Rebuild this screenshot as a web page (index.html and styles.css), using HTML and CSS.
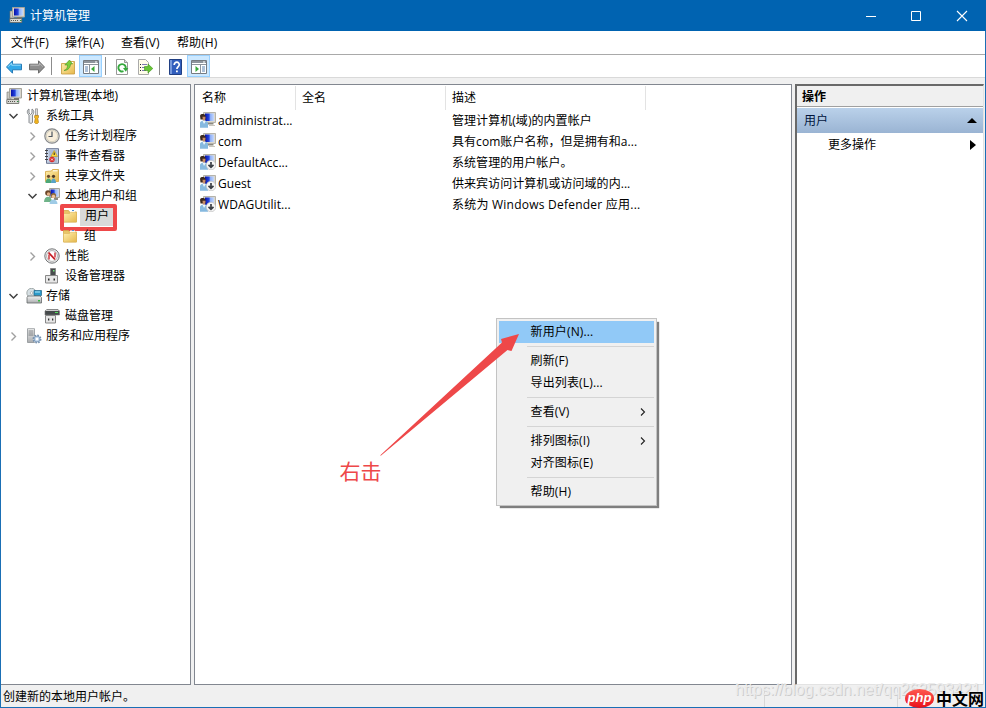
FILE: index.html
```html
<!doctype html>
<html lang="zh-CN">
<head>
    <meta charset="utf-8">
    <title>计算机管理</title>
    <link rel="stylesheet" href="styles.css">
</head>
<body>
    <!-- icons -->
    <svg class="defs">
        <defs>
            <linearGradient id="blue" x1="0" y1="0" x2="1" y2="0">
                <stop offset="0" stop-color="#0711a8"/><stop offset=".45" stop-color="#2445e0"/><stop offset=".6" stop-color="#8fb0f8"/><stop offset="1" stop-color="#c5d8fc"/>
            </linearGradient>
            <linearGradient id="gold" x1="0" y1="0" x2="1" y2="1">
                <stop offset="0" stop-color="#fff0b0"/><stop offset="1" stop-color="#e6b84c"/>
            </linearGradient>
            <linearGradient id="steel" x1="0" y1="0" x2="0" y2="1">
                <stop offset="0" stop-color="#f4f4f4"/><stop offset="1" stop-color="#a9abad"/>
            </linearGradient>
        </defs>
        <symbol id="computer" viewBox="0 0 16 16">
            <path d="M1 4h4v7H1z" fill="#c9c9c4" stroke="#77776f" stroke-width=".6"/>
            <path d="M3.500.5h12v9.500h-12z" fill="#d8d5cb" stroke="#a5a39a"/>
            <path d="M5 1.500h9v7H5z" fill="url(#blue)"/>
            <path d="M8 10h5v2H8z" fill="#77776f"/>
            <path d="M.8 11.500h12v4h-12z" fill="#d7d7d2" stroke="#66665f" stroke-width=".8"/>
            <path d="M2 13.500h8" stroke="#55554f" stroke-dasharray="1 1"/>
            <path d="M11 13h1.500v1H11z" fill="#2d8a40"/>
        </symbol>
        <symbol id="tools" viewBox="0 0 16 16">
            <path d="M3 1v4l1.500 1.500L6 5V1c2 1 2.500 4 .5 6v7.500c0 1-3.500 1-3.500 0V7C.5 5 1 2 3 1z" fill="#e4e6e8" stroke="#6d7276" stroke-width=".8"/>
            <path d="M9.500.8h2v6.500h-2z" fill="#ddd" stroke="#777" stroke-width=".6"/>
            <path d="M8.700 7.500h3.800v2l-.7 1 .7 4-1 1h-2l-1-1 .7-4-.7-1z" fill="#f0b41f" stroke="#a8740b" stroke-width=".6"/>
        </symbol>
        <symbol id="clock" viewBox="0 0 16 16">
            <circle cx="8" cy="8" r="7.200" fill="#e9e6dc" stroke="#85878a" stroke-width="1.200"/>
            <circle cx="8" cy="8" r="5.700" fill="#f8eedb" stroke="#c9c4b2" stroke-width=".7"/>
            <path d="M8 3.500V8.500H4.500" fill="none" stroke="#4b5560" stroke-width="1.200"/>
        </symbol>
        <symbol id="event" viewBox="0 0 16 16">
            <path d="M2.500.7h12v14.600h-12z" fill="#c3d0e4" stroke="#6b7690"/>
            <path d="M5 3h8M5 5h8M5 7h8M5 9h8M5 11h8M5 13h8" stroke="#8a9cbd" stroke-width=".8"/>
            <path d="M1 2.500h3M1 5.500h3M1 8.500h3M1 11.500h3" stroke="#444"/>
            <path d="M10.200 2.500l3.300 6h-6.600z" fill="#ffd83b" stroke="#b78d08" stroke-width=".5"/>
            <path d="M10.200 4.500v2.500" stroke="#222"/>
            <circle cx="8" cy="11.500" r="2.700" fill="#d92a2a"/><path d="M7 10.500l2 2m0-2l-2 2" stroke="#fff" stroke-width=".8"/>
        </symbol>
        <symbol id="share" viewBox="0 0 16 16">
            <path d="M1.500 3.500l6-.5 1-1.500h6v12h-13z" fill="url(#gold)" stroke="#d2a23b" stroke-width=".8"/><path d="M9 2.800h4.500" stroke="#fff"/>
            <circle cx="4.500" cy="8.300" r="1.600" fill="#6b4a2d"/><circle cx="9.500" cy="8.300" r="1.600" fill="#4c3926"/>
            <path d="M1.500 15c0-6 6-6 6 0z" fill="#4ca777"/><path d="M7 15c0-6 5-6 5 0z" fill="#58a3c8"/>
        </symbol>
        <symbol id="group" viewBox="0 0 16 16">
            <path d="M5.500.5h10v9h-10z" fill="#d8d5cb" stroke="#a5a39a"/>
            <path d="M6.500 1.500h8v7h-8z" fill="url(#blue)"/><path d="M10 10h4v2h-4z" fill="#8a887f"/>
            <circle cx="4" cy="5" r="2.800" fill="#6a4527"/><circle cx="4.500" cy="6" r="1.700" fill="#e0ad83"/>
            <circle cx="9.500" cy="7.500" r="2.600" fill="#8f6a3d"/><circle cx="9.500" cy="8.500" r="1.700" fill="#efc49c"/>
            <path d="M0 14c0-7 8-7 8 0z" fill="#6fb389"/><path d="M5.500 16c0-6 8-6 8 0z" fill="#9fcbe6"/>
        </symbol>
        <symbol id="folder" viewBox="0 0 16 16">
            <path d="M1.500 2.500h5l1 1.500h7v10h-13z" fill="#e9c567" stroke="#d5aa49" stroke-width=".8"/>
            <path d="M8 2.500h5v3H8z" fill="#fff"/><path d="M10 2h2v1h-2z" fill="#4a90d8"/>
            <path d="M1.500 5.500h6l1-1.200h6v9.700h-13z" fill="url(#gold)" stroke="#dcb65a" stroke-width=".6"/>
        </symbol>
        <symbol id="perf" viewBox="0 0 16 16">
            <circle cx="8" cy="8" r="7.200" fill="#eee" stroke="#747678"/>
            <circle cx="8" cy="8" r="5.400" fill="#fff" stroke="#999" stroke-width=".7"/>
            <path d="M5 11.500V6.500M11 4.500v5" stroke="#c51d24" stroke-width="1.300"/>
            <path d="M4.500 4.500l6.500 7" stroke="#c51d24" stroke-width="1.800"/>
        </symbol>
        <symbol id="device" viewBox="0 0 16 16">
            <path d="M6.500.5h5v8h-5z" fill="#484c4d" stroke="#888"/><path d="M9 2h1.500v1.500H9z" fill="#72e47b"/>
            <path d="M1.500 7.500h12v7.500h-12z" fill="#e6e6e6" stroke="#888"/>
            <path d="M4 10.500h1.500v2H4zM9.500 10.500H11v2H9.500z" fill="#333"/>
        </symbol>
        <symbol id="storage" viewBox="0 0 16 16">
            <circle cx="5.500" cy="5" r="4.700" fill="#d7e0e4" stroke="#86908f" stroke-width=".7"/><circle cx="5.500" cy="5" r="1.300" fill="#fff" stroke="#888" stroke-width=".5"/>
            <path d="M8 2.500h7.500v5H8z" fill="#2b9ac9" stroke="#1c6286" stroke-width=".7"/><path d="M9 3.500h5v1H9z" fill="#b5e8fb"/>
            <path d="M1 9.500L2 8h12l1.500 1.500V15H1z" fill="url(#steel)" stroke="#66696b" stroke-width=".8"/><path d="M12 12h2v1.500h-2z" fill="#38b83f"/>
        </symbol>
        <symbol id="disk" viewBox="0 0 16 16">
            <path d="M1 3l2-1.500h11L15.500 3v4H1z" fill="#45494a" stroke="#777" stroke-width=".6"/><path d="M2 2.500h12.500" stroke="#ccc"/>
            <path d="M11 4.500h3" stroke="#54e05d"/>
            <path d="M1.500 7.500h10v7.500h-10z" fill="#e6e6e6" stroke="#888"/><path d="M4 10.500h1.300v2H4zM8 10.500h1.300v2H8z" fill="#333"/>
        </symbol>
        <symbol id="service" viewBox="0 0 16 16">
            <path d="M1.500.7h7v13.800h-7z" fill="url(#steel)" stroke="#8d9296" stroke-width=".8"/>
            <path d="M2.500 3h5M2.500 5h5M2.500 7h5" stroke="#62686c" stroke-width=".8"/>
            <circle cx="11" cy="11" r="3.600" fill="#dceafa" stroke="#7590ad" stroke-width="1.800" stroke-dasharray="1.600 1.200"/>
            <circle cx="11" cy="11" r="2.900" fill="#c3d8ee" stroke="#6b89aa" stroke-width=".7"/><circle cx="11" cy="11" r="1.200" fill="#fff"/>
        </symbol>
        <symbol id="user" viewBox="0 0 16 16">
            <path d="M3.500.5h12v10h-12z" fill="#dbd8cf" stroke="#b5b3aa"/>
            <path d="M5 1.500h9v7.500H5z" fill="url(#blue)"/><path d="M7.500 11h6v1.500h-6z" fill="#8b897f"/><path d="M9 13.500h6" stroke="#c9c7bf"/>
            <path d="M0 3.500C1 1.500 5 1.500 5.500 4v3.500H.5z" fill="#3c2a20"/><path d="M2.500 4.800h3L5 9H3z" fill="#c98d66"/>
            <path d="M0 15.800V11c0-3.500 7.500-3.500 8 0v4.800z" fill="#86b9df"/><path d="M2.500 8.800L4 12l2-3.200" fill="#eef6fb"/>
        </symbol>
        <symbol id="off" viewBox="0 0 16 16">
            <use href="#user"/>
            <circle cx="11" cy="11" r="4.800" fill="#f6f6f6" stroke="#b5b5b5" stroke-width=".6"/>
            <path d="M11 8v5M8.500 10.800l2.500 2.500 2.500-2.500" fill="none" stroke="#3b3f46" stroke-width="1.700"/>
        </symbol>
        <symbol id="back" viewBox="0 0 16 16">
            <path d="M.5 8L6.500 1.800v3.400h9v5.600h-9v3.400z" fill="#35a9e8" stroke="#1a70b0" stroke-width=".9"/><path d="M2 7.800L5.700 4v2.200h9" fill="none" stroke="#97dcfb"/>
        </symbol>
        <symbol id="next" viewBox="0 0 16 16">
            <path d="M15.500 8l-6-6.200v3.400h-9v5.600h9v3.400z" fill="#8e8e8e" stroke="#626262" stroke-width=".9"/><path d="M1.300 6.200h9V4l3.700 3.800" fill="none" stroke="#bbb"/>
        </symbol>
        <symbol id="up" viewBox="0 0 16 16">
            <path d="M1.500 4.500h6l1-2h6v12.500h-13z" fill="url(#gold)" stroke="#c69a3c" stroke-width=".8"/><path d="M9.500 3.500H13" stroke="#fff"/>
            <path d="M4 11.500c3-1 3.500-3 3.500-5.500H4.800L9.500 1l3 4h-2c0 3-2 6.500-6.500 6.500z" fill="#7bcf3d" stroke="#4a9427" stroke-width=".6"/>
        </symbol>
        <symbol id="pane" viewBox="0 0 16 16">
            <path d="M.5 1.500h15v13H.5z" fill="#fff" stroke="#757a80"/><path d="M1 2h14v2H1z" fill="#8d949c"/><path d="M12 3h2" stroke="#fff"/>
            <path d="M1 5.500h14M6.500 6v8.500" stroke="#8d949c"/><path d="M2 8h3M2 10h3M2 12h3" stroke="#5a81af"/><path d="M11.500 7v6L8 10z" fill="#38a83a"/>
        </symbol>
        <symbol id="refresh" viewBox="0 0 16 16">
            <path d="M2.500.5h8l3 3v12h-11z" fill="#fff" stroke="#999"/><path d="M10.500.5v3h3" fill="#ddd" stroke="#999"/>
            <path d="M9.500 12.200A3.700 3.700 0 1 1 11.700 9.500" fill="none" stroke="#35a83d" stroke-width="1.900"/><path d="M9 9h5.300l-2.500 3.700z" fill="#35a83d"/>
        </symbol>
        <symbol id="export" viewBox="0 0 16 16">
            <path d="M1.500.5h7l3 3v12h-10z" fill="#fffdea" stroke="#aaa"/><path d="M3 5.500h1M3 8.500h1M3 11.500h1" stroke="#222"/><path d="M5 5.500h5M5 8.500h4M5 11.500h4" stroke="#7d78b0"/>
            <path d="M7.500 7.500h3.500V5l4.800 4.500L11 14v-2.500H7.500z" fill="#67c534" stroke="#3d931b" stroke-width=".6"/>
        </symbol>
        <symbol id="help" viewBox="0 0 16 16">
            <path d="M1.500.5h12v15h-12z" fill="#315ebd" stroke="#203f83"/><path d="M2 1h2v14H2z" fill="#7698db"/>
            <path d="M6.200 6c0-4 5.500-3.500 5 0-.2 1.500-2.300 1.800-2.300 4" fill="none" stroke="#fff" stroke-width="1.700"/><path d="M8 11.500h1.800v1.800H8z" fill="#fff"/>
        </symbol>
        <symbol id="action" viewBox="0 0 16 16">
            <path d="M.5 1.500h15v13H.5z" fill="#fff" stroke="#757a80"/><path d="M1 2h14v2H1z" fill="#8d949c"/><path d="M12 3h2" stroke="#fff"/>
            <path d="M1 5.500h14M9.500 6v8.500" stroke="#8d949c"/><path d="M11 8h3M11 10h3M11 12h3" stroke="#5a81af"/><path d="M4.500 7v6L8 10z" fill="#38a83a"/>
        </symbol>
        <symbol id="open" viewBox="0 0 11 11"><path d="M1.500 3l4 4 4-4" fill="none" stroke="#404040" stroke-width="1.500"/></symbol>
        <symbol id="closed" viewBox="0 0 11 11"><path d="M3.500 1.500l4 4-4 4" fill="none" stroke="#a0a0a0" stroke-width="1.400"/></symbol>
    </svg>

    <div id="window">
        <div class="title">
            <svg class="icon"><use href="#computer"/></svg>
            <span>计算机管理</span>
            <svg class="controls" width="103" height="12" viewBox="0 0 103 12"><path d="M1 6.500h10M46.500 1.500h9v9h-9z" fill="none" stroke="#fff"/><path d="M92 1l10 10m0-10L92 11" stroke="#fff" stroke-width="1.100"/></svg>
        </div>
        <div class="menubar">
            <span>文件(F)</span><span>操作(A)</span><span>查看(V)</span><span>帮助(H)</span>
        </div>
        <div class="toolbar">
            <span class="tool"><svg class="icon"><use href="#back"/></svg></span>
            <span class="tool"><svg class="icon"><use href="#next"/></svg></span>
            <i></i>
            <span class="tool"><svg class="icon"><use href="#up"/></svg></span>
            <span class="tool on"><svg class="icon"><use href="#pane"/></svg></span>
            <i></i>
            <span class="tool"><svg class="icon"><use href="#refresh"/></svg></span>
            <span class="tool"><svg class="icon"><use href="#export"/></svg></span>
            <i></i>
            <span class="tool"><svg class="icon"><use href="#help"/></svg></span>
            <span class="tool on"><svg class="icon"><use href="#action"/></svg></span>
        </div>
        <div class="main">
            <ul class="tree">
                <li class="root"><svg class="icon"><use href="#computer"/></svg><span>计算机管理(本地)</span></li>
                <li class="l1"><svg class="arrow"><use href="#open"/></svg><svg class="icon"><use href="#tools"/></svg><span>系统工具</span></li>
                <li class="l2"><svg class="arrow"><use href="#closed"/></svg><svg class="icon"><use href="#clock"/></svg><span>任务计划程序</span></li>
                <li class="l2"><svg class="arrow"><use href="#closed"/></svg><svg class="icon"><use href="#event"/></svg><span>事件查看器</span></li>
                <li class="l2"><svg class="arrow"><use href="#closed"/></svg><svg class="icon"><use href="#share"/></svg><span>共享文件夹</span></li>
                <li class="l2"><svg class="arrow"><use href="#open"/></svg><svg class="icon"><use href="#group"/></svg><span>本地用户和组</span></li>
                <li class="l3"><svg class="icon"><use href="#folder"/></svg><span class="sel">用户</span><b class="frame"></b></li>
                <li class="l3"><svg class="icon"><use href="#folder"/></svg><span>组</span></li>
                <li class="l2"><svg class="arrow"><use href="#closed"/></svg><svg class="icon"><use href="#perf"/></svg><span>性能</span></li>
                <li class="l2"><svg class="arrow"></svg><svg class="icon"><use href="#device"/></svg><span>设备管理器</span></li>
                <li class="l1"><svg class="arrow"><use href="#open"/></svg><svg class="icon"><use href="#storage"/></svg><span>存储</span></li>
                <li class="l2"><svg class="arrow"></svg><svg class="icon"><use href="#disk"/></svg><span>磁盘管理</span></li>
                <li class="l1"><svg class="arrow"><use href="#closed"/></svg><svg class="icon"><use href="#service"/></svg><span>服务和应用程序</span></li>
            </ul>
            <div class="list">
                <div class="head"><span>名称</span><span>全名</span><span>描述</span></div>
                <div class="row"><svg class="icon"><use href="#user"/></svg><span class="name">administrat...</span><span>管理计算机(域)的内置帐户</span></div>
                <div class="row"><svg class="icon"><use href="#user"/></svg><span class="name">com</span><span>具有com账户名称，但是拥有和a...</span></div>
                <div class="row"><svg class="icon"><use href="#off"/></svg><span class="name">DefaultAcc...</span><span>系统管理的用户帐户。</span></div>
                <div class="row"><svg class="icon"><use href="#off"/></svg><span class="name">Guest</span><span>供来宾访问计算机或访问域的内...</span></div>
                <div class="row"><svg class="icon"><use href="#off"/></svg><span class="name">WDAGUtilit...</span><span class="wide">系统为 Windows Defender 应用...</span></div>
            </div>
            <div class="actions">
                <div class="cap">操作</div>
                <div class="band"><span>用户</span><svg width="10" height="5"><path d="M0 5l5-5 5 5z"/></svg></div>
                <div class="more"><span>更多操作</span><svg width="6" height="10"><path d="M0 0l6 5-6 5z"/></svg></div>
            </div>
        </div>
        <div class="status"><span>创建新的本地用户帐户。</span><i></i><i></i></div>
    </div>

    <ul class="menu">
        <li class="hot">新用户(N)...</li>
        <li class="line"></li>
        <li>刷新(F)</li>
        <li>导出列表(L)...</li>
        <li class="line"></li>
        <li>查看(V)<svg width="6" height="8"><path d="M1 .5L4.500 4 1 7.500"/></svg></li>
        <li class="line"></li>
        <li>排列图标(I)<svg width="6" height="8"><path d="M1 .5L4.500 4 1 7.500"/></svg></li>
        <li>对齐图标(E)</li>
        <li class="line"></li>
        <li>帮助(H)</li>
    </ul>

    <svg class="pointer" width="142" height="130" viewBox="0 0 142 130"><path d="M.3 127.300L122 14.500l-1-3.500 18-5-7.500 17-4-1L.8 127.800z" fill="#ee4849"/></svg>
    <div class="tip">右击</div>
    <div class="mark">https://blog.csdn.net/qq262593421</div>
    <div class="logo"><span class="php">php</span><span class="cn">中文网</span></div>
</body>
</html>
```
FILE: styles.css
```css
*{
    margin: 0;
    padding: 0;
    box-sizing: border-box;
    list-style: none;
}
body{
    width: 986px;
    height: 708px;
    position: relative;
    overflow: hidden;
    font: 12px/20px "Open Sans", "Noto Sans CJK SC", sans-serif;
    color: #000;
    white-space: nowrap;
}
svg{
    display: block;
    flex: none;
}
.defs{
    position: absolute;
    width: 0;
    height: 0;
}
.icon{
    width: 16px;
    height: 16px;
}
#window{
    height: 708px;
    display: flex;
    flex-direction: column;
    background: #f0f0f0;
    border: 1px solid #1a6fb5;
    border-top: 0;
}
.title{
    height: 31px;
    margin: 0 -1px;
    padding: 0 18px 0 9px;
    display: flex;
    align-items: center;
    gap: 5px;
    background: #0063b1;
    color: #fff;
}
.title .icon{
    margin-bottom: 1px;
}
.controls{
    margin-left: auto;
}
.menubar{
    height: 24px;
    padding: 1px 0 0 10px;
    display: flex;
    align-items: center;
    background: #fff;
    border-bottom: 1px solid #a9a9a9;
}
.menubar span{
    width: 56px;
    letter-spacing: .1px;
}
.menubar span:first-child{
    width: 54px;
}
.toolbar{
    height: 23px;
    padding-left: 2px;
    display: flex;
    align-items: center;
    background: #fff;
    border-bottom: 1px solid #d9d9d9;
}
.tool{
    width: 23px;
    height: 22px;
    padding-top: 1px;
    display: flex;
    align-items: center;
    justify-content: center;
}
.tool:first-child, .tool:nth-child(2){
    padding-right: 2px;
}
.tool.on{
    background: #cce8ff;
    border: 1px solid #99d1ff;
}
.toolbar i{
    width: 1px;
    height: 18px;
    margin: 0 4px 0 2px;
    background: #8c8c8c;
}
.toolbar i ~ i{
    margin-left: 3px;
}
.main{
    height: 601px;
    margin-top: 6px;
    display: flex;
}
.tree{
    width: 190px;
    padding-top: 1px;
    background: #fff;
    border: 1px solid #828790;
    border-left: 0;
}
.tree li{
    height: 20px;
    display: flex;
    align-items: center;
    position: relative;
}
.tree .icon{
    margin-right: 5px;
}
.tree .root{
    padding-left: 5px;
}
.l1{
    padding-left: 7px;
}
.l2{
    padding-left: 26px;
}
.l3{
    padding-left: 61px;
}
.tree .l1 .icon{
    margin-right: 4px;
}
.arrow{
    width: 11px;
    height: 11px;
    margin-right: 6px;
}
.l1 .arrow{
    margin-right: 7px;
}
.l3 span{
    margin-left: -1px;
    padding-left: 2px;
}
.l3 .sel{
    width: 34px;
    margin-left: -3px;
    padding-left: 5px;
    background: #d9d9d9;
}
.frame{
    position: absolute;
    left: 59px;
    top: -2px;
    width: 57px;
    height: 27px;
    border: 4px solid #ee4849;
    border-radius: 2px;
}
.list{
    width: 598px;
    margin-left: 3px;
    background: #fff;
    border: 1px solid #828790;
}
.head{
    height: 25px;
    padding-top: 1px;
    display: flex;
    line-height: 24px;
}
.head span{
    width: 150px;
    height: 24px;
    padding-left: 6px;
    border-right: 1px solid #e3e3e3;
}
.head span:first-child{
    width: 101px;
    padding-left: 7px;
}
.head span:last-child{
    width: 200px;
}
.row{
    height: 21px;
    padding-left: 5px;
    display: flex;
    align-items: center;
}
.row .icon{
    margin-bottom: 2px;
}
.name{
    width: 234px;
    margin-left: 2px;
    letter-spacing: .05px;
}
.name + span{
    letter-spacing: .05px;
}
.row .wide{
    letter-spacing: .23px;
}
.actions{
    width: 189px;
    margin-left: 3px;
    background: #fff;
    border: solid #696969;
    border-width: 2px 1px 1px 2px;
    border-right-color: #e3e3e3;
    border-bottom-color: #e3e3e3;
}
.cap{
    height: 21px;
    padding: 1px 0 0 5px;
    background: #f0f0f0;
    border-bottom: 1px solid #a0a0a0;
    font-weight: bold;
}
.band{
    height: 25px;
    margin-top: 1px;
    padding: 0 6px 0 7px;
    display: flex;
    align-items: center;
    justify-content: space-between;
    background: linear-gradient(#bad1ea, #9ab4d3);
}
.band span{
    color: #00143c;
}
.more{
    height: 23px;
    padding: 0 7px 0 31px;
    display: flex;
    align-items: center;
    justify-content: space-between;
}
.status{
    flex: 1;
    padding: 1px 0 0 2px;
    display: flex;
    align-items: center;
}
.status span{
    flex: none;
    width: 761px;
}
.status i{
    flex: none;
    width: 133px;
    height: 20px;
    border-left: 1px solid #d7d7d7;
}
.status i:last-child{
    width: 85px;
}
.menu{
    position: absolute;
    left: 496px;
    top: 318px;
    width: 161px;
    height: 188px;
    padding: 2px;
    background: #f0f0f0;
    border: 1px solid #c3c3c3;
    box-shadow: 3px 3px 1px -1px rgba(0, 0, 0, .5);
}
.menu li{
    height: 22px;
    padding: 0 8px 0 31.5px;
    display: flex;
    align-items: center;
    justify-content: space-between;
    letter-spacing: .15px;
}
.menu .hot{
    background: #91c9f7;
}
.menu .line{
    height: 1px;
    margin: 3px 0 3px 28px;
    padding: 0;
    background: #d4d4d4;
}
.menu path{
    fill: none;
    stroke: #222;
    stroke-width: 1.1;
}
.pointer{
    position: absolute;
    left: 380px;
    top: 328px;
}
.tip{
    position: absolute;
    left: 339.5px;
    top: 458px;
    font: 21px/24px "Noto Sans CJK SC", sans-serif;
    color: #ee4849;
}
.mark{
    position: absolute;
    left: 735px;
    top: 680px;
    font: 16px/20px "Liberation Sans", sans-serif;
    color: #ececec;
    text-shadow: 1px 1px 0 #cdcdcd;
}
.logo{
    position: absolute;
    left: 905px;
    top: 688px;
    display: flex;
    align-items: center;
    height: 20px;
}
.php{
    width: 29px;
    height: 19px;
    border-radius: 50%;
    background: linear-gradient(#ff5a50, #e8101b);
    color: #fff;
    font: italic bold 13px/17px "Liberation Sans", sans-serif;
    text-align: center;
}
.cn{
    margin-left: 2px;
    font: bold 16px/20px "Noto Sans CJK SC", sans-serif;
    text-shadow: 0 0 1px #fff;
}
```
